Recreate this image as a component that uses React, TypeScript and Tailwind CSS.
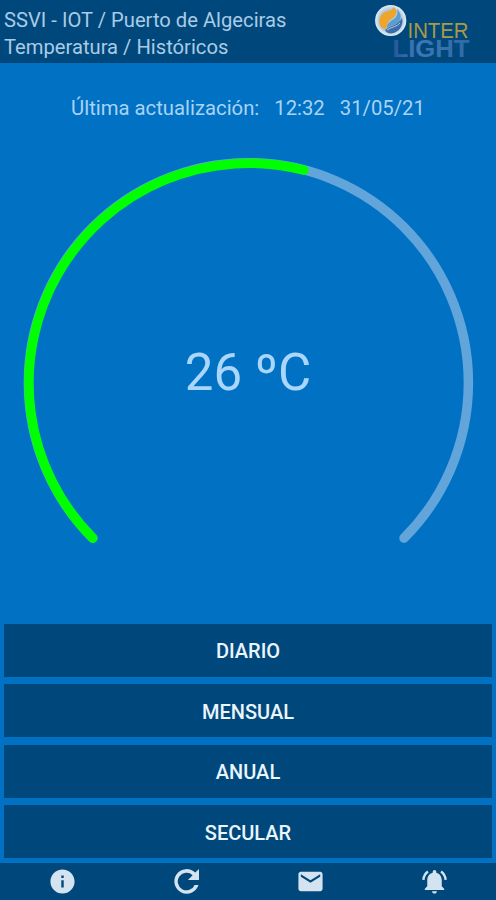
import { MdInfo, MdEmail } from "react-icons/md";

const periods = ["DIARIO", "MENSUAL", "ANUAL", "SECULAR"];

function Logo() {
  return (
    <svg width="100" height="62" viewBox="0 0 100 62" className="shrink-0 overflow-visible" fontFamily="'Liberation Sans', sans-serif">
      <defs>
        <linearGradient id="light" x1="0" x2="1">
          <stop offset="0" stopColor="#27549c" />
          <stop offset="0.3" stopColor="#3f78b5" />
          <stop offset="1" stopColor="#2f6aa8" />
        </linearGradient>
        <radialGradient id="ball">
          <stop offset="0.7" stopColor="#a9c6e2" />
          <stop offset="1" stopColor="#e6eff2" />
        </radialGradient>
      </defs>
      <circle cx="18.7" cy="20.5" r="15.6" fill="url(#ball)" />
      <path d="M8 25C6 18 9 14 13 12C17 11 21 10 21 7C26 9 25 14 22 17C19 20 17 19 16 23C15 25 15 27 14 29C11 29 9 28 8 25Z" fill="#eda62b" />
      <path d="M15 28C15 23 19 21 22 19C26 16 26 13 25 9C29 13 30 18 27 22C24 25 19 25 15 28Z" fill="#5b9dcc" />
      <path d="M13 30C18 25 26 26 30 18C32 25 27 33 19 33.5C16 33.5 14 32 13 30Z" fill="#3b6cac" />
      <path d="M15 30C20 26.500 25 27 28 23" fill="none" stroke="#a9cbe5" strokeWidth="1" />
      <text x="35.500" y="38" fontSize="21.500" textLength="61" lengthAdjust="spacingAndGlyphs" fill="#a99a45">INTER</text>
      <text x="20.500" y="57" fontSize="23.500" fontWeight="700" textLength="77" lengthAdjust="spacingAndGlyphs" fill="url(#light)">LIGHT</text>
    </svg>
  );
}

function Refresh() {
  return (
    <svg width="37" height="37" viewBox="0 0 24 24" fill="currentColor">
      <path d="M17.700 6.200A8 8 0 1 0 19.800 14.200H17.300A5.700 5.700 0 1 1 16 7.900L12.900 11.100H20.100V3.900z" />
    </svg>
  );
}

function RingingBell() {
  return (
    <svg width="29" height="29" viewBox="0 0 24 24" fill="currentColor">
      <path d="M12 22c1.100 0 2-.9 2-2h-4c0 1.100.9 2 2 2zm6-6v-5c0-3.100-1.600-5.600-4.500-6.300V4a1.500 1.500 0 0 0-3 0v.7C7.600 5.400 6 7.900 6 11v5l-2 2v1h16v-1z" />
      <path d="M6.600 3.700C4.300 5.300 3 7.900 2.800 10.700M17.400 3.700C19.700 5.300 21 7.900 21.200 10.700" fill="none" stroke="currentColor" strokeWidth="2" />
    </svg>
  );
}

function Gauge() {
  return (
    <div className="relative h-[440px] w-full">
      <svg width="496" height="440" viewBox="0 143 496 440" fill="none" strokeWidth="9.500" strokeLinecap="round">
        <path d="M92.8 538.2A220 220 0 1 1 404 538.2" stroke="#62a5da" />
        <path d="M92.8 538.2A220 220 0 0 1 304 170.2" stroke="#00ff00" />
      </svg>
      <div className="absolute inset-x-0 top-[200px] text-center text-[51px] leading-[60px] text-[#a9d6fa]">
        26 ºC
      </div>
    </div>
  );
}

export default function App() {
  return (
    <div className="flex h-[900px] w-[496px] flex-col bg-[#0071c3] font-[Roboto,sans-serif]">
      <header className="flex h-[63px] justify-between bg-[#00487b] pr-[24px] pl-1">
        <div className="pt-[7px] text-[20.2px] leading-[27px] whitespace-nowrap text-[#a9cbe6]">
          <p>SSVI - IOT / Puerto de Algeciras</p>
          <p>Temperatura / Históricos</p>
        </div>
        <Logo />
      </header>
      <div className="flex h-[80px] justify-center gap-[15px] pt-[33px] text-[20.3px] leading-6 text-[#a9d3f5]">
        <span>Última actualización:</span>
        <span>12:32</span>
        <span>31/05/21</span>
      </div>
      <Gauge />
      <div className="mt-auto flex flex-col gap-[7.5px] px-1 pb-[5px]">
        {periods.map((p) => (
          <button key={p} className="h-[53px] bg-[#00487b] pt-[2px] text-[20px] font-medium text-[#eaf5fc]">
            {p}
          </button>
        ))}
      </div>
      <footer className="grid h-[37px] grid-cols-4 place-items-center bg-[#00487b] text-[#d3e3ef]">
        <MdInfo size={29} />
        <Refresh />
        <MdEmail size={29} />
        <RingingBell />
      </footer>
    </div>
  );
}
